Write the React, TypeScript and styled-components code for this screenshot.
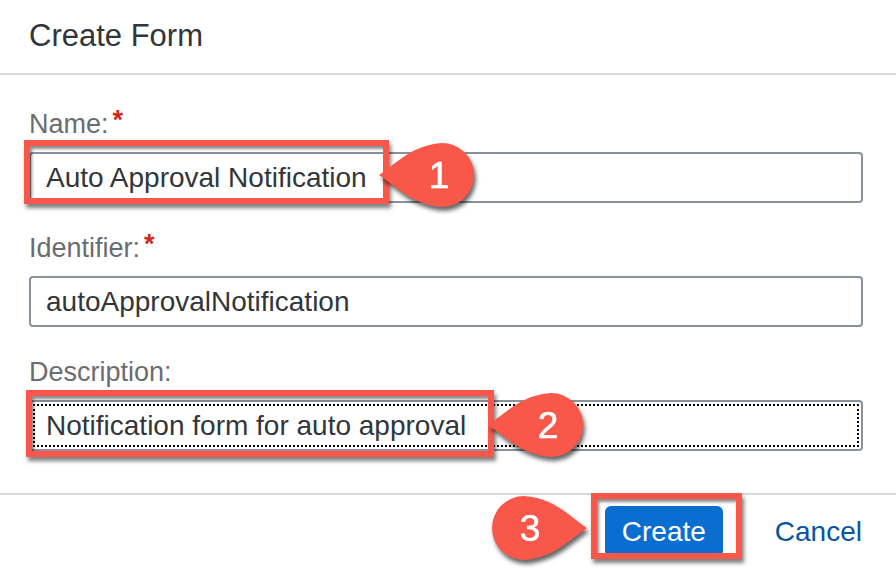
import React from "react";
import styled, { createGlobalStyle } from "styled-components";

const GlobalStyle = createGlobalStyle`
  html, body {
    margin: 0;
    padding: 0;
    background: #ffffff;
  }
  #root {
    width: 896px;
    height: 568px;
    overflow: hidden;
    position: relative;
  }
`;

const Dialog = styled.div`
  width: 896px;
  height: 568px;
  display: flex;
  flex-direction: column;
  font-family: "Liberation Sans", Arial, sans-serif;
  color: #32363a;
  position: relative;
`;

const Header = styled.header`
  height: 75px;
  box-sizing: border-box;
  padding: 20px 0 0 29px;
  border-bottom: 2px solid #d9d9d9;
`;

const Title = styled.h1`
  margin: 0;
  font-size: 31px;
  line-height: 31px;
  font-weight: normal;
  color: #32363a;
`;

const Body = styled.div`
  flex: 1;
  display: flex;
  flex-direction: column;
  gap: 32px;
  padding: 36px 33px 0 29px;
`;

const Field = styled.div`
  display: flex;
  flex-direction: column;
  gap: 14px;
`;

const Label = styled.label`
  display: block;
  height: 27px;
  font-size: 27px;
  line-height: 27px;
  color: #6a6d70;
`;

const Required = styled.span`
  color: #d0271d;
  font-weight: bold;
  margin-left: 4px;
  position: relative;
  top: -4px;
`;

const Input = styled.input<{ $focused?: boolean }>`
  height: 51px;
  box-sizing: border-box;
  border: 2px solid #89919a;
  border-radius: 4px;
  padding: 0 15px;
  font-family: "Liberation Sans", Arial, sans-serif;
  font-size: 28px;
  color: #32363a;
  background: #ffffff;
  outline: ${(p) => (p.$focused ? "2px dotted #000000" : "none")};
  outline-offset: -6px;
`;

const Footer = styled.footer`
  height: 75px;
  box-sizing: border-box;
  border-top: 2px solid #d9d9d9;
  display: flex;
  align-items: center;
  justify-content: flex-end;
  gap: 36px;
  padding-right: 18px;
`;

const PrimaryButton = styled.button`
  width: 118px;
  height: 51px;
  border: none;
  border-radius: 6px;
  background: #0a6ed1;
  color: #ffffff;
  font-family: "Liberation Sans", Arial, sans-serif;
  font-size: 28px;
  padding: 0;
`;

const LinkButton = styled.button`
  border: none;
  background: transparent;
  color: #0854a0;
  font-family: "Liberation Sans", Arial, sans-serif;
  font-size: 28px;
  padding: 0 16px;
`;

/* annotation overlay: red boxes and numbered markers drawn on top */

const Highlight = styled.div<{ $x: number; $y: number; $w: number; $h: number }>`
  position: absolute;
  left: ${(p) => p.$x}px;
  top: ${(p) => p.$y}px;
  width: ${(p) => p.$w}px;
  height: ${(p) => p.$h}px;
  box-sizing: border-box;
  border: 6px solid #fa574b;
  box-shadow: inset 2px 3px 3px rgba(0, 0, 0, 0.45),
    2px 4px 4px rgba(0, 0, 0, 0.5);
  pointer-events: none;
`;

const MarkerSvg = styled.svg<{ $x: number; $y: number }>`
  position: absolute;
  left: ${(p) => p.$x}px;
  top: ${(p) => p.$y}px;
  width: 110px;
  height: 80px;
  overflow: visible;
  filter: drop-shadow(2px 4px 2px rgba(0, 0, 0, 0.6));
  pointer-events: none;
`;

const DROP =
  "M7 36 C 25 24, 40 6, 70 4 A 32 32 0 0 1 70 68 C 40 66, 25 48, 7 36 Z";

const Marker = ({
  cx,
  cy,
  n,
  pointRight,
}: {
  cx: number;
  cy: number;
  n: string;
  pointRight?: boolean;
}) => {
  const centerX = pointRight ? 40 : 70;
  // the digit sits a little toward the tail side in the reference
  const textX = pointRight ? centerX + 6 : centerX - 3;
  return (
    <MarkerSvg $x={cx - centerX} $y={cy - 36} viewBox="0 0 110 80">
      <path
        d={DROP}
        fill="#fa574b"
        transform={pointRight ? "translate(110 0) scale(-1 1)" : undefined}
      />
      <text
        x={textX}
        y={49}
        textAnchor="middle"
        fill="#ffffff"
        stroke="#ffffff"
        strokeWidth="0.6"
        fontSize="37"
        fontFamily="Liberation Sans, Arial, sans-serif"
      >
        {n}
      </text>
    </MarkerSvg>
  );
};

export default function App() {
  return (
    <>
      <GlobalStyle />
      <Dialog>
        <Header>
          <Title>Create Form</Title>
        </Header>
        <Body>
          <Field>
            <Label>
              Name:<Required>*</Required>
            </Label>
            <Input readOnly defaultValue="Auto Approval Notification" />
          </Field>
          <Field>
            <Label>
              Identifier:<Required>*</Required>
            </Label>
            <Input readOnly defaultValue="autoApprovalNotification" />
          </Field>
          <Field>
            <Label>Description:</Label>
            <Input
              readOnly
              $focused
              defaultValue="Notification form for auto approval"
            />
          </Field>
        </Body>
        <Footer>
          <PrimaryButton>Create</PrimaryButton>
          <LinkButton>Cancel</LinkButton>
        </Footer>

        <Highlight $x={24} $y={140} $w={365} $h={64} />
        <Marker cx={442} cy={175} n="1" />
        <Highlight $x={26} $y={390} $w={468} $h={67} />
        <Marker cx={551} cy={425} n="2" />
        <Highlight $x={591} $y={493} $w={151} $h={66} />
        <Marker cx={524} cy={528} n="3" pointRight />
      </Dialog>
    </>
  );
}
